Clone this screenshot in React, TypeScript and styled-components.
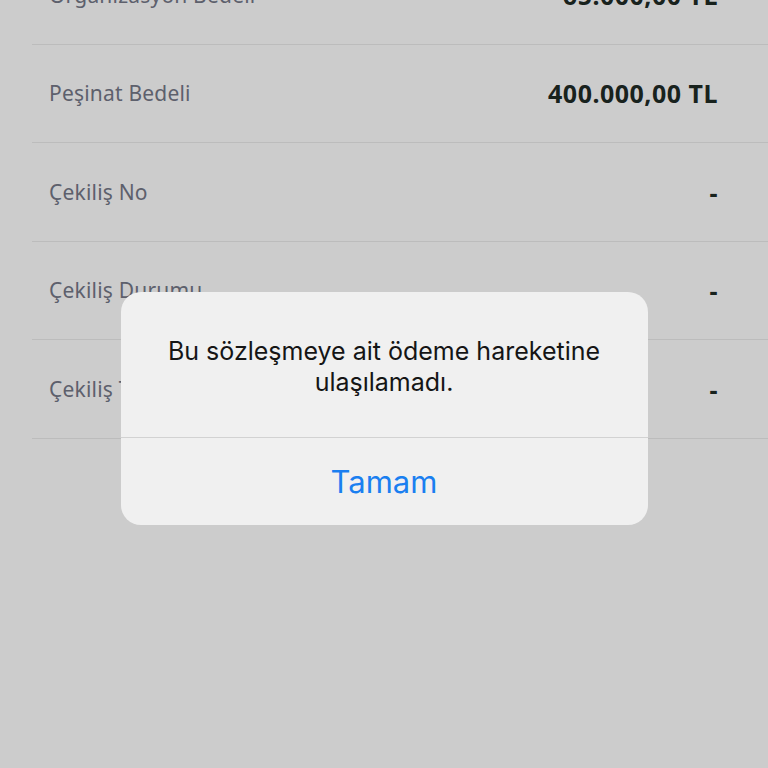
import styled, { createGlobalStyle } from "styled-components";

const GlobalStyle = createGlobalStyle`
    html, body {
        margin: 0;
        padding: 0;
        background: #cccccc;
        overflow: hidden;
    }
`

const Page = styled.div`
    width: 768px;
    height: 768px;
    background: #cccccc;
    overflow: hidden;
    position: relative;
`

const List = styled.div`
    margin: -54px 0 0 32px;
    display: flex;
    flex-direction: column;
`

const Row = styled.div`
    box-sizing: border-box;
    height: 98.5px;
    display: flex;
    align-items: center;
    justify-content: space-between;
    padding: 0 50px 0 17px;
    border-bottom: 1.5px solid #bcbcbc;
`

const Label = styled.span`
    font-family: "Noto Sans", "Open Sans", sans-serif;
    font-size: 21px;
    font-weight: 400;
    letter-spacing: 0.2px;
    color: #5d606c;
`

const Value = styled.span`
    font-family: "Noto Sans", "Open Sans", sans-serif;
    font-size: 25px;
    font-weight: 700;
    letter-spacing: 0.5px;
    color: #18221d;
`

const Overlay = styled.div`
    position: absolute;
    inset: 0;
    display: flex;
    justify-content: center;
    align-items: flex-start;
    padding-top: 292px;
`

const Dialog = styled.div`
    width: 527px;
    background: #f0f0f0;
    border-radius: 20px;
    display: flex;
    flex-direction: column;
    overflow: hidden;
`

const Message = styled.p`
    margin: 0;
    box-sizing: border-box;
    height: 146px;
    padding: 44px 24px 0;
    text-align: center;
    font-family: "Inter", "Roboto", sans-serif;
    font-size: 25px;
    line-height: 31px;
    color: #151515;
    border-bottom: 1px solid #d2d2d2;
`

const ActionButton = styled.button`
    height: 87px;
    border: none;
    background: transparent;
    font-family: "Inter", "Roboto", sans-serif;
    font-size: 31px;
    color: #1a7ff0;
    cursor: pointer;
    padding: 0;
`

const rows = [
    { label: "Organizasyon Bedeli", value: "65.000,00 TL" },
    { label: "Peşinat Bedeli", value: "400.000,00 TL" },
    { label: "Çekiliş No", value: "-" },
    { label: "Çekiliş Durumu", value: "-" },
    { label: "Çekiliş Tarihi", value: "-" },
]

const App = () => {
    return (
        <>
            <GlobalStyle />
            <Page>
                <List>
                    {rows.map((row) => (
                        <Row key={row.label}>
                            <Label>{row.label}</Label>
                            <Value>{row.value}</Value>
                        </Row>
                    ))}
                </List>
                <Overlay>
                    <Dialog>
                        <Message>Bu sözleşmeye ait ödeme hareketine ulaşılamadı.</Message>
                        <ActionButton>Tamam</ActionButton>
                    </Dialog>
                </Overlay>
            </Page>
        </>
    )
}

export default App;
